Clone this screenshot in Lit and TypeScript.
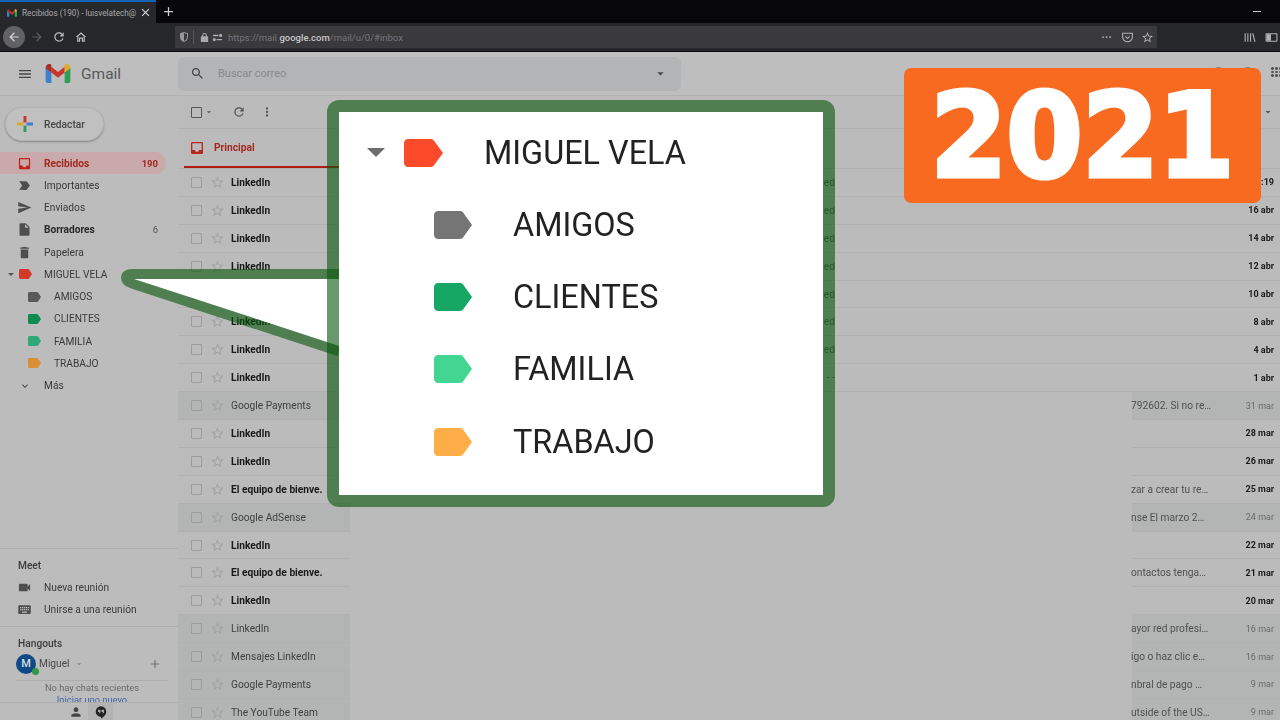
import { LitElement, html, css, svg } from "lit";
import { customElement } from "lit/decorators.js";

const P = {
  inbox: "M5 3h14a2 2 0 012 2v14a2 2 0 01-2 2H5a2 2 0 01-2-2V5a2 2 0 012-2zm0 2v10h4c0 1.66 1.35 3 3 3s3-1.34 3-3h4V5z",
  important: "M3.5 18.99l11 .01c.67 0 1.27-.33 1.63-.84L20.5 12l-4.37-6.16c-.36-.51-.96-.84-1.63-.84l-11 .01L8.34 12 3.5 18.99z",
  send: "M2.01 21L23 12 2.01 3 2 10l15 2-15 2z",
  file: "M14 2H6c-1.1 0-1.99.9-1.99 2L4 20c0 1.1.89 2 1.99 2H18c1.1 0 2-.9 2-2V8l-6-6zm-1 7V3.5L18.5 9H13z",
  trash: "M6 19c0 1.1.9 2 2 2h8c1.1 0 2-.9 2-2V7H6v12zM19 4h-3.5l-1-1h-5l-1 1H5v2h14V4z",
  label: "M17.63 5.84C17.27 5.33 16.67 5 16 5L5 5.01C3.9 5.01 3 5.9 3 7v10c0 1.1.9 1.99 2 1.99L16 19c.67 0 1.27-.33 1.63-.84L22 12l-4.37-6.16z",
  video: "M17 10.5V7c0-.55-.45-1-1-1H4c-.55 0-1 .45-1 1v10c0 .55.45 1 1 1h12c.55 0 1-.45 1-1v-3.5l4 4v-11l-4 4z",
  keyboard: "M20 5H4c-1.1 0-1.99.9-1.99 2L2 17c0 1.1.9 2 2 2h16c1.1 0 2-.9 2-2V7c0-1.1-.9-2-2-2zm-9 3h2v2h-2V8zm0 3h2v2h-2v-2zM8 8h2v2H8V8zm0 3h2v2H8v-2zm-1 2H5v-2h2v2zm0-3H5V8h2v2zm9 7H8v-2h8v2zm0-4h-2v-2h2v2zm0-3h-2V8h2v2zm3 3h-2v-2h2v2zm0-3h-2V8h2v2z",
  search: "M15.5 14h-.79l-.28-.27C15.41 12.59 16 11.11 16 9.5 16 5.91 13.09 3 9.5 3S3 5.91 3 9.5 5.91 16 9.5 16c1.61 0 3.09-.59 4.23-1.57l.27.28v.79l5 4.99L20.49 19l-4.99-5zm-6 0C7.01 14 5 11.99 5 9.5S7.01 5 9.5 5 14 7.01 14 9.5 11.99 14 9.5 14z",
  refresh: "M17.65 6.35C16.2 4.9 14.21 4 12 4c-4.42 0-7.99 3.58-7.99 8s3.57 8 7.99 8c3.73 0 6.84-2.55 7.73-6h-2.08c-.82 2.33-3.04 4-5.65 4-3.31 0-6-2.69-6-6s2.69-6 6-6c1.66 0 3.14.69 4.22 1.78L13 11h7V4l-2.35 2.35z",
  star: "M22 9.24l-7.19-.62L12 2 9.19 8.63 2 9.24l5.46 4.73L5.82 21 12 17.27 18.18 21l-1.63-7.03L22 9.24zM12 15.4l-3.76 2.27 1-4.28-3.32-2.88 4.38-.38L12 6.1l1.71 4.04 4.38.38-3.32 2.88 1 4.28L12 15.4z",
  person: "M12 12c2.21 0 4-1.79 4-4s-1.79-4-4-4-4 1.79-4 4 1.79 4 4 4zm0 2c-2.67 0-8 1.34-8 4v2h16v-2c0-2.66-5.33-4-8-4z",
  caret: "M7 10l5 5 5-5z",
  chevron: "M7.41 8.59L12 13.17l4.59-4.58L18 10l-6 6-6-6z",
  plus: "M19 13h-6v6h-2v-6H5v-2h6V5h2v6h6v2z",
  menu: "M3 18h18v-2H3v2zm0-5h18v-2H3v2zm0-7v2h18V6H3z",
  more: "M12 8a2 2 0 100-4 2 2 0 000 4zm0 2a2 2 0 100 4 2 2 0 000-4zm0 6a2 2 0 100 4 2 2 0 000-4z",
  close: "M19 6.41L17.59 5 12 10.59 6.41 5 5 6.41 10.59 12 5 17.59 6.41 19 12 13.41 17.59 19 19 17.59 13.41 12z",
  back: "M20 11H7.83l5.59-5.59L12 4l-8 8 8 8 1.41-1.41L7.83 13H20v-2z",
  forward: "M4 11h12.17l-5.59-5.59L12 4l8 8-8 8-1.41-1.41L16.17 13H4v-2z",
  home: "M12 4L3 12h2.5v8h5v-5h3v5h5v-8H21L12 4zm0 2.8l4.5 4V18h-1v-5h-7v5h-1v-7.200z",
  lock: "M18 9h-1V7a5 5 0 00-10 0v2H6a2 2 0 00-2 2v9a2 2 0 002 2h12a2 2 0 002-2v-9a2 2 0 00-2-2zM9.200 9V7a2.800 2.800 0 015.600 0v2z",
  shield: "M12 2L4 4.500V12c0 5 3.500 8.500 8 10 4.500-1.500 8-5 8-10V4.500L12 2zm0 2.200L18 6v6c0 3.800-2.500 6.500-6 7.800V4.200z",
  hangouts: "M12 2a9 9 0 00-9 9c0 5 4 9 9 9v3c4.500-2.200 9-6.500 9-12a9 9 0 00-9-9zm-1 11.500l-1.800 1V12H7V8h4zm6 0l-1.800 1V12H13V8h4z",
};

const ic = (d: string, cls = "") =>
  html`<svg class="ic ${cls}" viewBox="0 0 24 24">${svg`<path fill-rule="evenodd" d=${d}></path>`}</svg>`;

/* a tag glyph cropped tight to its outline, so its box is its visible size */
const tag = (cls = "") =>
  html`<svg class="ic tag ${cls}" viewBox="3 5 19 14" preserveAspectRatio="none">${svg`<path d=${P.label}></path>`}</svg>`;

const caret = (cls = "") =>
  html`<svg class="ic ${cls}" viewBox="7 10 10 5" preserveAspectRatio="none">${svg`<path d=${P.caret}></path>`}</svg>`;

const gmailM = () => html`<svg class="logo" viewBox="0 0 26 20">
  ${svg`<path fill="#3f7fd0" d="M0 4v14a2 2 0 002 2h4V9z"></path>
  <path fill="#2f9e55" d="M26 4v14a2 2 0 01-2 2h-4V9z"></path>
  <path fill="#c8362b" d="M6 2.800L13 8.300l7-5.500V9l-7 5.500L6 9z"></path>
  <path fill="#a92b22" d="M0 4c0-3.500 3.800-5 6-3.200V9L0 4.500z"></path>
  <path fill="#e0a92a" d="M26 4c0-3.500-3.800-5-6-3.200V9l6-4.500z"></path>`}
</svg>`;

const mailRows = [
  ["LinkedIn", 1, "12:19", ""], ["LinkedIn", 1, "16 abr", ""], ["LinkedIn", 1, "14 abr", ""], ["LinkedIn", 1, "12 abr", ""],
  ["LinkedIn", 1, "10 abr", ""], ["LinkedIn", 1, "8 abr", ""], ["LinkedIn", 1, "4 abr", ""], ["LinkedIn", 1, "1 abr", ""],
  ["Google Payments", 0, "31 mar", "792602. Si no re…"], ["LinkedIn", 1, "28 mar", ""], ["LinkedIn", 1, "26 mar", ""],
  ["El equipo de bienve.", 1, "25 mar", "zar a crear tu re…"], ["Google AdSense", 0, "24 mar", "nse El marzo 2…"],
  ["LinkedIn", 1, "22 mar", ""], ["El equipo de bienve.", 1, "21 mar", "ontactos tenga…"], ["LinkedIn", 1, "20 mar", ""],
  ["LinkedIn", 0, "16 mar", "ayor red profesi…"], ["Mensajes LinkedIn", 0, "16 mar", "igo o haz clic e…"],
  ["Google Payments", 0, "9 mar", "nbral de pago …"], ["The YouTube Team", 0, "9 mar", "utside of the US…"],
] as const;

const navItems = [
  ["Recibidos", P.inbox, "active", "190"], ["Importantes", P.important, "", ""], ["Enviados", P.send, "", ""],
  ["Borradores", P.file, "strong", "6"], ["Papelera", P.trash, "", ""],
];
const subLabels = [["AMIGOS", "c-grey"], ["CLIENTES", "c-green"], ["FAMILIA", "c-mint"], ["TRABAJO", "c-orange"]];

@customElement("app-root")
export class AppRoot extends LitElement {
  static styles = css`
    :host { display: block; width: 1280px; height: 720px; position: relative; overflow: hidden; background: #bcbcbc;
      font-family: Roboto, "Liberation Sans", sans-serif; color: #222; }
    * { box-sizing: border-box; }
    .ic { display: block; width: 14px; height: 14px; fill: currentColor; flex: none; }
    .page { height: 720px; display: flex; flex-direction: column; filter: blur(0.45px); }

    /* browser chrome */
    .tabs { height: 23px; background: #08080a; display: flex; align-items: stretch; flex: none; }
    .tab { width: 156px; background: #27282c; border-top: 2px solid #1163b4; display: flex; align-items: center;
      padding-left: 7px; gap: 5px; color: #a9a9ab; font-size: 8.2px; }
    .tab .logo { width: 10px; height: 8px; }
    .tab span { width: 114px; white-space: nowrap; }
    .tab .ic { width: 13px; height: 13px; color: #d5d5d5; margin-left: -2px; }
    .newtab { width: 24px; display: flex; align-items: center; justify-content: center; color: #d0d0d0; }
    .newtab .ic { width: 15px; height: 15px; }
    .toolbar { height: 29px; background: #26272b; border-bottom: 1px solid #0c0c0d; display: flex; align-items: center;
      padding-left: 3px; color: #bbb; flex: none; }
    .circle { width: 22px; height: 22px; border-radius: 50%; background: #626266; display: flex; align-items: center;
      justify-content: center; color: #d6d6d6; }
    .tb { width: 14px; height: 14px; }
    .fwd { color: #5d5d61; margin-left: 5px; }
    .rel { margin-left: 8px; }
    .hm { margin-left: 8px; }
    .url { margin-left: 87px; width: 982px; height: 22px; background: #3a3a3d; display: flex; align-items: center;
      padding-left: 3px; font-size: 9.5px; color: #75757a; }
    .url .shield { width: 12px; height: 12px; color: #999; }
    .sep { width: 1px; height: 14px; background: #555; margin: 0 5px 0 3px; }
    .url .lock { width: 11px; height: 11px; color: #aaa; }
    .slide { width: 11px; height: 11px; margin: 0 5px 0 2px; color: #aaa; }
    .url b { font-weight: 500; color: #c8c8c8; }
    .urlend { margin-left: auto; display: flex; align-items: center; gap: 7px; padding-right: 3px; color: #b5b5b5; }
    .urlend .dots { font-size: 10px; font-weight: 700; letter-spacing: 0.5px; margin-right: 2px; }
    .urlend .ic { width: 13px; height: 13px; }
    .tbend { margin-left: auto; display: flex; gap: 9px; padding-right: 2px; color: #b5b5b5; }
    .tbend .ic { width: 13px; height: 13px; }
    .minimize { margin-left: auto; width: 8px; height: 1px; background: #ccc; align-self: center; margin-right: 19px; }

    /* gmail */
    .gm-head { height: 44px; flex: none; display: flex; align-items: center; background: #bebebe; border-bottom: 1px solid #b1b1b1; }
    .brand { width: 178px; display: flex; align-items: center; padding-left: 17px; flex: none; color: #454545; }
    .brand .ic { width: 16px; height: 16px; }
    .logo { display: block; width: 26px; height: 19px; flex: none; }
    .brand .logo { margin-left: 12px; }
    .brand span { font-size: 15.5px; margin-left: 10px; color: #585858; }
    .search { width: 503px; height: 34px; background: #b2b4b5; border-radius: 6px; display: flex; align-items: center;
      padding: 0 13px 0 12px; color: #8a8a8a; font-size: 11px; }
    .search .ic { width: 15px; height: 15px; color: #444; margin-right: 13px; }
    .search .end { margin-left: auto; margin-right: 0; color: #444; }
    .gm-right { margin-left: auto; display: flex; color: #555; padding-right: 0; }
    .apps { width: 10px; height: 10px; margin-right: -1px; display: grid; grid-template-columns: repeat(3, 3px); gap: 1px; margin-left: 17px; }
    .apps i { background: #555; border-radius: 50%; }
    .round { width: 13px; height: 13px; border-radius: 50%; border: 1.5px solid #777; margin-left: 16px; }
    .gm-body { flex: 1; min-height: 0; display: flex; }

    .side { width: 178px; flex: none; display: flex; flex-direction: column; overflow: hidden; font-size: 10.2px; color: #3a3a3a; }
    .compose { width: 99px; height: 34px; margin: 11px 0 11px 5px; border-radius: 17px; background: #c0c0c0; flex: none;
      border: 1px solid #b2b2b2; box-shadow: 0 1px 2px rgba(0, 0, 0, 0.28); display: flex; align-items: center; padding-left: 10px;
      font-weight: 500; color: #474747; font-size: 10.2px; }
    .plus { width: 18px; height: 18px; margin-right: 10px; flex: none; }
    .nav { height: 22.25px; width: 166px; display: flex; align-items: center; padding-left: 17px; flex: none; border-radius: 0 11px 11px 0; }
    .nav .ic { width: 15px; height: 15px; color: #4e4e4e; margin-right: 12px; }
    .nav .n { margin-left: auto; padding-right: 8px; font-size: 9.5px; color: #555; }
    .nav.active { background: #c9a9a9; color: #a12a22; font-weight: 700; }
    .nav.active .ic { color: #b8271d; }
    .nav.active .n { color: #a12a22; }
    .nav.strong { font-weight: 700; color: #2a2a2a; }
    .nav.strong .n { font-weight: 400; }
    .nav.root { padding-left: 8px; }
    .nav.root .cr { width: 6px; height: 3px; margin-right: 5px; color: #555; }
    .nav .tag { width: 13px; height: 10px; margin-right: 12px; }
    .nav.sub { padding-left: 28px; }
    .nav.sub .tag { margin-right: 13px; }
    .nav.more { padding-left: 19px; }
    .nav.more .ic { width: 12px; height: 12px; margin-right: 13px; }
    .c-red { color: #d3392a !important; }
    .c-grey { color: #595959 !important; }
    .c-green { color: #0f8a50 !important; }
    .c-mint { color: #2ea878 !important; }
    .c-orange { color: #d98e38 !important; }
    .meet { margin-top: auto; height: 78px; border-top: 1px solid #aeaeae; flex: none; padding-top: 5px; }
    .hd { height: 22px; display: flex; align-items: center; padding-left: 18px; font-weight: 500; font-size: 10.2px; color: #3b3b3b; }
    .hang { height: 76px; border-top: 1px solid #aeaeae; flex: none; overflow: hidden; padding-top: 6px; position: relative; }
    .hang .hd { height: 20px; }
    .me { display: flex; align-items: center; height: 21px; padding-left: 16px; color: #4a4a4a; }
    .avatar { width: 20px; height: 20px; border-radius: 50%; background: #104a86; color: #d7dde5; font-size: 11px; font-weight: 500;
      display: flex; align-items: center; justify-content: center; position: relative; margin-right: 3px; flex: none; }
    .avatar::after { content: ""; position: absolute; right: -3px; bottom: -1px; width: 7px; height: 7px; border-radius: 50%; background: #2e9a44; }
    .me .cr { width: 10px; height: 10px; margin-left: 4px; color: #888; }
    .me .pl { width: 14px; height: 14px; margin-left: auto; margin-right: 16px; color: #777; }
    .rule { height: 1px; background: #aeaeae; margin: 6px 10px 0 16px; }
    .empty { text-align: center; font-size: 9.3px; color: #6a6a6a; line-height: 12px; padding: 1px 10px 0 16px; }
    .empty a { color: #3f62a8; display: block; }
    .foot { height: 18px; flex: none; border-top: 1px solid #aeaeae; display: flex; padding-left: 63px; color: #444; }
    .foot div { width: 25px; display: flex; align-items: center; justify-content: center; }
    .foot .ic { width: 14px; height: 14px; }
    .foot .on { background: #b3b3b3; color: #222; }

    .main { width: 1102px; flex: none; display: flex; flex-direction: column; overflow: hidden; background: #bbbbbb; }
    .actions { height: 33px; flex: none; display: flex; align-items: center; padding-left: 13px; color: #555; border-bottom: 1px solid #b2b2b2; }
    .bigbox { width: 11px; height: 11px; border: 1.5px solid #555; border-radius: 1px; }
    .actions .cr { width: 10px; height: 10px; margin-left: 2px; }
    .actions .rf { width: 14px; height: 14px; margin-left: 18px; }
    .actions .mr { width: 14px; height: 14px; margin-left: 14px; }
    .actions .end { margin-left: auto; width: 12px; height: 12px; margin-right: 6px; }
    .cats { height: 40px; flex: none; border-bottom: 1px solid #b2b2b2; padding-left: 6px; }
    .cat { width: 156px; height: 39px; display: flex; align-items: center; padding-left: 5px; color: #a12a22; font-weight: 700; font-size: 10.2px;
      border-bottom: 2px solid #ae1c12; }
    .cat .ic { width: 16px; height: 16px; margin-right: 9px; color: #b8271d; }
    .row { height: 27.9px; flex: none; display: grid; grid-template-columns: 172px 485px 297px 148px; font-size: 10.2px; }
    .row.full { border-bottom: 1px solid #b1b1b1; }
    .cell { display: flex; align-items: center; min-width: 0; }
    .row:not(.full) .l, .row:not(.full) .r { border-bottom: 1px solid #b1b1b1; }
    .l { padding-left: 13px; }
    .row.read .l, .row.read .r { background: #b3b5b5; color: #3f3f3f; }
    .cb { width: 11px; height: 11px; border: 1.2px solid #9c9c9c; border-radius: 1px; flex: none; }
    .st { width: 15px; height: 15px; margin: 0 6.5px 0 7.5px; color: #a2a2a2; }
    .sender { white-space: nowrap; }
    .row.bold .sender, .row.bold .date { font-weight: 700; color: #191919; }
    .m { justify-content: flex-end; color: #5e5e5e; font-size: 10.2px; }
    .snip { width: 84px; white-space: nowrap; color: #505050; text-indent: -1px; flex: none; }
    .date { margin-left: auto; padding-right: 6px; color: #6a6a6a; font-size: 9px; white-space: nowrap; }

    /* annotations */
    .callout { position: absolute; left: 0; top: 0; width: 1280px; height: 720px; pointer-events: none; filter: blur(0.3px); }
    .box { position: absolute; left: 327px; top: 100px; width: 508px; height: 407px; border: 12px solid rgba(7, 87, 8, 0.6);
      border-radius: 12px; background: #fff; background-clip: padding-box; padding-top: 4.5px; display: flex; flex-direction: column; }
    .line { height: 72.25px; flex: none; display: flex; align-items: center; font-size: 32.4px; color: #222; filter: blur(0.5px); padding-left: 95px; }
    .line .tag { width: 38px; height: 28px; margin-right: 41px; }
    .line.top { padding-left: 28px; }
    .line.top .cr { width: 18px; height: 9px; color: #6d6d6d; margin-right: 19px; }
    .line.top .tag { width: 39px; }
    .t-red { color: #fa4a2a; }
    .t-grey { color: #757575; }
    .t-green { color: #16a765; }
    .t-mint { color: #42d692; }
    .t-orange { color: #ffad46; }
    .badge { position: absolute; left: 904px; top: 68px; width: 357px; height: 135px; background: #f96a21; border-radius: 7px;
      display: flex; align-items: center; justify-content: center; color: #fff; font-family: "DejaVu Sans", "Liberation Sans", sans-serif;
      font-weight: 700; font-size: 116px; line-height: 1; -webkit-text-stroke: 5px #fff; }
    .badge span { display: block; transform: scaleX(0.94); white-space: nowrap; }
  `;

  render() {
    return html`
      <div class="page">
        <div class="tabs">
          <div class="tab">${gmailM()}<span>Recibidos (190) - luisvelatech@</span>${ic(P.close)}</div>
          <div class="newtab">${ic(P.plus)}</div>
          <div class="minimize"></div>
        </div>
        <div class="toolbar">
          <div class="circle">${ic(P.back, "tb")}</div>
          ${ic(P.forward, "tb fwd")}${ic(P.refresh, "tb rel")}${ic(P.home, "tb hm")}
          <div class="url">
            ${ic(P.shield, "shield")}<div class="sep"></div>${ic(P.lock, "lock")}
            <svg class="ic slide" viewBox="0 0 24 24">${svg`<path d="M2 6h12v3H2zM19 4a3.500 3.500 0 100 7 3.500 3.500 0 000-7zM10 15h12v3H10zM5 13a3.500 3.500 0 100 7 3.500 3.500 0 000-7z"></path>`}</svg>
            <span>https://mail.<b>google.com</b>/mail/u/0/#inbox</span>
            <div class="urlend">
              <span class="dots">···</span>
              <svg class="ic" viewBox="0 0 24 24">${svg`<path fill="none" stroke="currentColor" stroke-width="2" d="M3 4h18v7a9 9 0 01-18 0zM8 10l4 4 4-4"></path>`}</svg>
              ${ic(P.star)}
            </div>
          </div>
          <div class="tbend">
            <svg class="ic" viewBox="0 0 24 24">${svg`<path d="M3 4h2v16H3zM8 4h2v16H8zM13 4h2v16h-2zM17 4.500l2-.6 4 16-2 .6z"></path>`}</svg>
            <svg class="ic" viewBox="0 0 24 24">${svg`<path fill="none" stroke="currentColor" stroke-width="2" d="M3 5h18a1 1 0 011 1v12a1 1 0 01-1 1H3a1 1 0 01-1-1V6a1 1 0 011-1z"></path><path d="M3 6h8v12H3z"></path>`}</svg>
          </div>
        </div>
        <div class="gm-head">
          <div class="brand">${ic(P.menu)}${gmailM()}<span>Gmail</span></div>
          <div class="search">${ic(P.search)}<span>Buscar correo</span>${ic(P.caret, "end")}</div>
          <div class="gm-right"><div class="round"></div><div class="round"></div>
            <div class="apps">${[...Array(9)].map(() => html`<i></i>`)}</div></div>
        </div>
        <div class="gm-body">
          <div class="side">
            <div class="compose">
              <svg class="plus" viewBox="0 0 36 36">${svg`<path fill="#3f7fd0" d="M21 15h13v6H21z"></path><path fill="#2f9e55" d="M15 21h6v13h-6z"></path><path fill="#e0a92a" d="M2 15h13v6H2z"></path><path fill="#c8362b" d="M15 2h6v13h-6z"></path>`}</svg>
              Redactar
            </div>
            ${navItems.map(([t, d, c, n]) => html`<div class="nav ${c}">${ic(d)}<span>${t}</span>${n ? html`<span class="n">${n}</span>` : ""}</div>`)}
            <div class="nav root">${caret("cr")}${tag("c-red")}<span>MIGUEL VELA</span></div>
            ${subLabels.map(([t, c]) => html`<div class="nav sub">${tag(c)}<span>${t}</span></div>`)}
            <div class="nav more">${ic(P.chevron)}<span>Más</span></div>
            <div class="meet">
              <div class="hd">Meet</div>
              <div class="nav">${ic(P.video)}<span>Nueva reunión</span></div>
              <div class="nav">${ic(P.keyboard)}<span>Unirse a una reunión</span></div>
            </div>
            <div class="hang">
              <div class="hd">Hangouts</div>
              <div class="me"><div class="avatar">M</div><span>Miguel</span>${ic(P.caret, "cr")}${ic(P.plus, "pl")}</div>
              <div class="rule"></div>
              <div class="empty">No hay chats recientes<a>Iniciar uno nuevo</a></div>
            </div>
            <div class="foot"><div>${ic(P.person)}</div><div class="on">${ic(P.hangouts)}</div></div>
          </div>
          <div class="main">
            <div class="actions">
              <div class="bigbox"></div>${ic(P.caret, "cr")}${ic(P.refresh, "rf")}${ic(P.more, "mr")}${ic(P.caret, "end")}
            </div>
            <div class="cats"><div class="cat">${ic(P.inbox)}<span>Principal</span></div></div>
            ${mailRows.map(([s, b, d, sn], i) => html`
              <div class="row ${b ? "bold" : "read"} ${i < 8 ? "full" : ""}">
                <div class="cell l"><div class="cb"></div>${ic(P.star, "st")}<span class="sender">${s}</span></div>
                <div class="cell m">${i < 7 ? "ed" : i === 7 ? "- -" : ""}</div>
                <div class="cell"></div>
                <div class="cell r">${sn ? html`<span class="snip">${sn}</span>` : ""}<span class="date">${d}</span></div>
              </div>`)}
          </div>
        </div>
      </div>

      <svg class="callout" viewBox="0 0 1280 720">${svg`
        <path fill="#fff" d="M339 279H133L339 346z"></path>
        <path fill="none" stroke="rgb(7,87,8)" stroke-opacity="0.6" stroke-width="10" d="M339 274H132C124 274 124 281 132 283.500L339 351.200"></path>
      `}</svg>

      <div class="box">
        <div class="line top">${caret("cr")}${tag("t-red")}<span>MIGUEL VELA</span></div>
        <div class="line">${tag("t-grey")}<span>AMIGOS</span></div>
        <div class="line">${tag("t-green")}<span>CLIENTES</span></div>
        <div class="line">${tag("t-mint")}<span>FAMILIA</span></div>
        <div class="line">${tag("t-orange")}<span>TRABAJO</span></div>
      </div>

      <div class="badge"><span>2021</span></div>
    `;
  }
}
